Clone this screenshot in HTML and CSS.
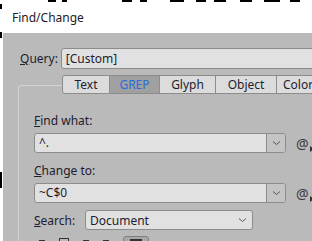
FILE: index.html
```html
<!DOCTYPE html>
<html>
<head>
<meta charset="utf-8">
<link rel="stylesheet" href="styles.css">
</head>
<body>
<div class="screen">
<div class="desk">
  <i class="blob" style="left:48px;top:0;width:8px;height:2px"></i>
  <i class="blob" style="left:62px;top:0;width:5px;height:2px"></i>
  <i class="blob" style="left:122px;top:0;width:10px;height:2px"></i>
  <i class="blob" style="left:140px;top:0;width:7px;height:2px"></i>
  <i class="blob" style="left:170px;top:0;width:14px;height:2px"></i>
  <i class="blob" style="left:196px;top:0;width:10px;height:2px"></i>
  <i class="blob" style="left:214px;top:0;width:12px;height:2px"></i>
  <i class="blob" style="left:240px;top:0;width:12px;height:2px"></i>
  <i class="blob" style="left:264px;top:0;width:16px;height:2px"></i>
  <i class="blob" style="left:290px;top:0;width:10px;height:2px"></i>
  <i class="blob" style="left:0;top:4px;width:2px;height:5px"></i>
  <i class="blob" style="left:0;top:32px;width:2px;height:6px"></i>
  <i class="blob" style="left:0;top:172px;width:2px;height:16px"></i>
</div>
<div class="dialog">
  <div class="titlebar">Find/Change</div>
  <div class="panel">
    <div class="query-row">
      <span class="qlabel"><u>Q</u>uery:</span>
      <div class="field query">[Custom]</div>
    </div>
    <div class="group">
      <div class="tabs">
        <span class="tab">Text</span>
        <span class="tab active">GREP</span>
        <span class="tab">Glyph</span>
        <span class="tab">Object</span>
        <span class="tab last">Color</span>
      </div>
      <div class="label"><u>F</u>ind what:</div>
      <div class="row">
        <div class="combo">
          <span class="val">^.</span>
          <span class="btn"><svg width="9" height="6" viewBox="0 0 9 6"><path d="M1 1.5 L4.5 4.5 L8 1.5" fill="none" stroke="#555" stroke-width="1"/></svg></span>
        </div>
        <span class="at">@<svg class="tri" width="4" height="6" viewBox="0 0 4 6"><path d="M0 0 L4 3 L0 6Z" fill="#333"/></svg></span>
      </div>
      <div class="label gap"><u>C</u>hange to:</div>
      <div class="row">
        <div class="combo">
          <span class="val">~C$0</span>
          <span class="btn"><svg width="9" height="6" viewBox="0 0 9 6"><path d="M1 1.5 L4.5 4.5 L8 1.5" fill="none" stroke="#555" stroke-width="1"/></svg></span>
        </div>
        <span class="at">@<svg class="tri" width="4" height="6" viewBox="0 0 4 6"><path d="M0 0 L4 3 L0 6Z" fill="#333"/></svg></span>
      </div>
      <div class="search-row">
        <span class="slabel"><u>S</u>earch:</span>
        <div class="select">
          <span class="val">Document</span>
          <svg width="9" height="6" viewBox="0 0 9 6"><path d="M1 1.5 L4.5 4.5 L8 1.5" fill="none" stroke="#555" stroke-width="1"/></svg>
        </div>
      </div>
      <div class="icons">
        <span class="ic dash"></span>
        <span class="ic box"></span>
        <span class="ic dash"></span>
        <span class="ic dash"></span>
        <span class="ic pressed"><span class="sq"></span></span>
      </div>
    </div>
  </div>
</div>
</div>
</body>
</html>
```
FILE: styles.css
```css
html, body {
  margin: 0;
  padding: 0;
  overflow: hidden;
}
body {
  background: #fff;
  font-family: "Noto Sans", "Open Sans", sans-serif;
  font-size: 12px;
  color: #231c2e;
}
.screen {
  width: 312px;
  height: 241px;
  overflow: hidden;
  position: relative;
}
.desk .blob {
  position: absolute;
  background: #000;
  display: block;
}
.dialog {
  margin: 3px 0 0 3px;
  width: 330px;
  height: 260px;
  background: #bababa;
}
.titlebar {
  height: 30px;
  line-height: 30px;
  background: #fff;
  padding-left: 9px;
  font-size: 12px;
  color: #1e1a28;
}
.panel {
  padding: 15px 0 0 15px;
}
.query-row {
  display: flex;
  align-items: center;
  padding-left: 2px;
  height: 21px;
}
.qlabel {
  width: 45px;
}
.field {
  box-sizing: border-box;
  height: 21px;
  border: 1px solid #8c8c8c;
  border-radius: 3px;
  background: #e1e1e1;
  padding-left: 4px;
  line-height: 19px;
}
.query {
  width: 300px;
}
.group {
  margin-top: 16px;
  border: 1px solid #d2d2d2;
  border-right: none;
  border-bottom: none;
  border-top-left-radius: 4px;
  height: 200px;
}
.tabs {
  display: flex;
  margin: -11px 0 0 43px;
  height: 19px;
}
.tab {
  box-sizing: border-box;
  height: 19px;
  line-height: 17px;
  border: 1px solid #8c8c8c;
  border-left: none;
  background: #dcdcdc;
  text-align: center;
  color: #231c2e;
  flex: none;
}
.tab:nth-child(1) { width: 48px; border-left: 1px solid #8c8c8c; border-radius: 3px 0 0 3px; }
.tab:nth-child(2) { width: 50px; }
.tab:nth-child(3) { width: 56px; }
.tab:nth-child(4) { width: 61px; }
.tab:nth-child(5) { width: 50px; text-align: left; padding-left: 6px; }
.tab.active {
  background: #a0a0a0;
  color: #2a6ed8;
}
.label {
  margin: 19px 0 0 15px;
  height: 16px;
  line-height: 16px;
}
.label.gap {
  margin-top: 10px;
}
.row {
  display: flex;
  align-items: center;
  margin: 4px 0 0 15px;
}
.combo {
  box-sizing: border-box;
  width: 252px;
  height: 20px;
  border: 1px solid #8c8c8c;
  border-radius: 3px;
  background: #e1e1e1;
  display: flex;
  flex: none;
}
.combo .val {
  flex: 1;
  padding-left: 4px;
  line-height: 18px;
}
.combo .btn {
  width: 18px;
  border-left: 1px solid #8c8c8c;
  background: #c4c4c4;
  border-radius: 0 2px 2px 0;
  display: flex;
  align-items: center;
  justify-content: center;
}
.at {
  margin-left: 10px;
  font-size: 14px;
  color: #3a3a3a;
  display: flex;
  align-items: flex-end;
  flex: none;
}
.at .tri {
  margin: 0 0 1px 1px;
}
.search-row {
  display: flex;
  align-items: center;
  margin: 7px 0 0 15px;
}
.slabel {
  width: 51px;
}
.select {
  box-sizing: border-box;
  width: 168px;
  height: 20px;
  border: 1px solid #8c8c8c;
  border-radius: 3px;
  background: #e1e1e1;
  display: flex;
  align-items: center;
  padding: 0 5px 0 4px;
}
.select .val {
  flex: 1;
}
.icons {
  display: flex;
  align-items: flex-start;
  margin: 6px 0 0 20px;
  gap: 14px;
}
.ic {
  display: block;
}
.ic.dash {
  width: 6px;
  height: 1px;
  margin-top: 4px;
  background: #333;
}
.ic.box {
  width: 8px;
  height: 6px;
  margin-top: 2px;
  border: 1px solid #333;
  border-bottom: none;
}
.ic.pressed {
  box-sizing: border-box;
  width: 26px;
  height: 20px;
  border: 1px solid #7e7e7e;
  border-radius: 3px;
  background: #a8a8a8;
  display: flex;
  justify-content: center;
  padding-top: 2px;
}
.ic.pressed .sq {
  width: 12px;
  height: 8px;
  background: #333;
}
```
